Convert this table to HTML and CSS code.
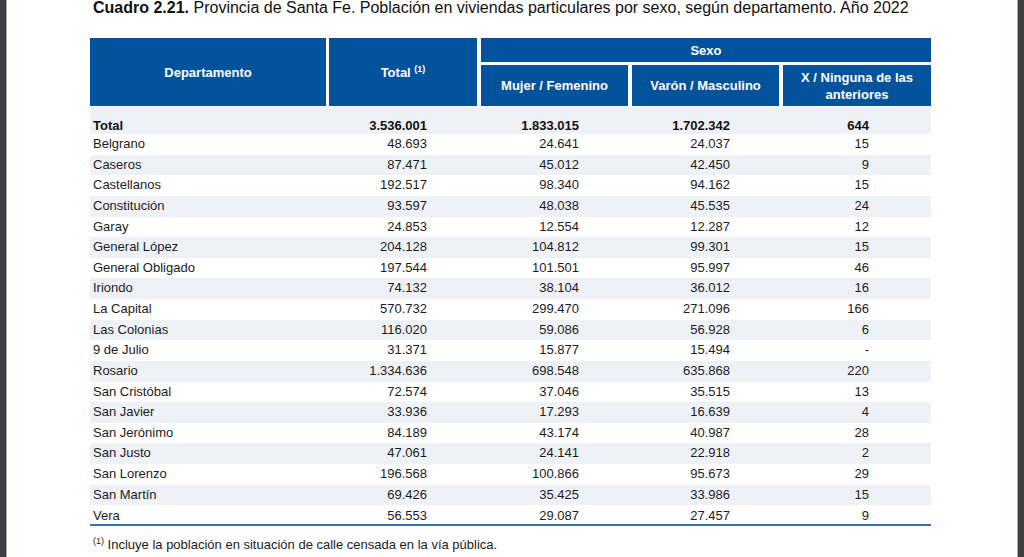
FILE: index.html
```html
<!DOCTYPE html>
<html lang="es">
<head>
<meta charset="utf-8">
<title>Cuadro 2.21</title>
<link rel="stylesheet" href="styles.css">
</head>
<body>
<div class="frame frame-left"></div>
<main class="page">
  <h1 class="title"><b>Cuadro 2.21.</b> Provincia de Santa Fe. Población en viviendas particulares por sexo, según departamento. Año 2022</h1>
  <table class="tbl">
    <colgroup>
      <col class="c-dept"><col class="c-total"><col class="c-num"><col class="c-num"><col class="c-x">
    </colgroup>
    <thead>
      <tr class="r1">
        <th rowspan="2" class="b3">Departamento</th>
        <th rowspan="2" class="b4">Total <sup>(1)</sup></th>
        <th colspan="3" class="sexo">Sexo</th>
      </tr>
      <tr class="r2">
        <th class="b4">Mujer / Femenino</th>
        <th class="b4">Varón / Masculino</th>
        <th class="last">X / Ninguna de las anteriores</th>
      </tr>
    </thead>
    <tbody>
      <tr class="total"><td>Total</td><td class="n">3.536.001</td><td class="n">1.833.015</td><td class="n">1.702.342</td><td class="n x">644</td></tr>
      <tr><td>Belgrano</td><td class="n">48.693</td><td class="n">24.641</td><td class="n">24.037</td><td class="n x">15</td></tr>
      <tr><td>Caseros</td><td class="n">87.471</td><td class="n">45.012</td><td class="n">42.450</td><td class="n x">9</td></tr>
      <tr><td>Castellanos</td><td class="n">192.517</td><td class="n">98.340</td><td class="n">94.162</td><td class="n x">15</td></tr>
      <tr><td>Constitución</td><td class="n">93.597</td><td class="n">48.038</td><td class="n">45.535</td><td class="n x">24</td></tr>
      <tr><td>Garay</td><td class="n">24.853</td><td class="n">12.554</td><td class="n">12.287</td><td class="n x">12</td></tr>
      <tr><td>General López</td><td class="n">204.128</td><td class="n">104.812</td><td class="n">99.301</td><td class="n x">15</td></tr>
      <tr><td>General Obligado</td><td class="n">197.544</td><td class="n">101.501</td><td class="n">95.997</td><td class="n x">46</td></tr>
      <tr><td>Iriondo</td><td class="n">74.132</td><td class="n">38.104</td><td class="n">36.012</td><td class="n x">16</td></tr>
      <tr><td>La Capital</td><td class="n">570.732</td><td class="n">299.470</td><td class="n">271.096</td><td class="n x">166</td></tr>
      <tr><td>Las Colonias</td><td class="n">116.020</td><td class="n">59.086</td><td class="n">56.928</td><td class="n x">6</td></tr>
      <tr><td>9 de Julio</td><td class="n">31.371</td><td class="n">15.877</td><td class="n">15.494</td><td class="n x">-</td></tr>
      <tr><td>Rosario</td><td class="n">1.334.636</td><td class="n">698.548</td><td class="n">635.868</td><td class="n x">220</td></tr>
      <tr><td>San Cristóbal</td><td class="n">72.574</td><td class="n">37.046</td><td class="n">35.515</td><td class="n x">13</td></tr>
      <tr><td>San Javier</td><td class="n">33.936</td><td class="n">17.293</td><td class="n">16.639</td><td class="n x">4</td></tr>
      <tr><td>San Jerónimo</td><td class="n">84.189</td><td class="n">43.174</td><td class="n">40.987</td><td class="n x">28</td></tr>
      <tr><td>San Justo</td><td class="n">47.061</td><td class="n">24.141</td><td class="n">22.918</td><td class="n x">2</td></tr>
      <tr><td>San Lorenzo</td><td class="n">196.568</td><td class="n">100.866</td><td class="n">95.673</td><td class="n x">29</td></tr>
      <tr><td>San Martín</td><td class="n">69.426</td><td class="n">35.425</td><td class="n">33.986</td><td class="n x">15</td></tr>
      <tr class="lastrow"><td>Vera</td><td class="n">56.553</td><td class="n">29.087</td><td class="n">27.457</td><td class="n x">9</td></tr>
    </tbody>
  </table>
  <p class="note"><sup>(1)</sup> Incluye la población en situación de calle censada en la vía pública.</p>
</main>
<div class="frame frame-right"></div>
</body>
</html>
```
FILE: styles.css
```css
html, body {
  margin: 0;
  padding: 0;
  height: 557px;
  overflow: hidden;
  background: #ffffff;
}
body {
  display: flex;
  font-family: "Liberation Sans", Arial, sans-serif;
  color: #1c1c1c;
}
.frame {
  width: 6px;
  flex: none;
  background: #3d4043;
}
.frame-left { border-right: 1px solid #a3a3a3; }
.frame-right { border-left: 1px solid #a8a8a8; width: 6px; margin-left: auto; }
.page {
  flex: 1;
  padding-left: 83px;
}
.title {
  margin: 0;
  padding-left: 3px;
  font-size: 16px;
  line-height: 15px;
  font-weight: normal;
  color: #111;
  white-space: nowrap;
}
.title b { font-weight: bold; }

.tbl {
  margin-top: 23px;
  width: 841px;
  table-layout: fixed;
  border-collapse: separate;
  border-spacing: 0;
  font-size: 13px;
}
.c-dept { width: 239px; }
.c-total { width: 152px; }
.c-num { width: 151px; }
.c-x { width: 148px; }

.tbl th {
  background: #03529c;
  color: #ffffff;
  font-weight: bold;
  text-align: center;
  padding: 0 6px;
  line-height: 17px;
  border-bottom: 1px solid #ffffff;
}
.tbl th.b3 { border-right: 3px solid #ffffff; }
.tbl th.b4 { border-right: 4px solid #ffffff; }
.tbl th.sexo { border-bottom: 3px solid #ffffff; }
.tbl th.last { padding: 0 14px; }
.tbl th sup {
  font-size: 9px;
  vertical-align: 5px;
  line-height: 0;
}
.r1 { height: 27px; }
.r2 { height: 42px; }

.tbl td {
  padding: 0 0 0 3px;
  line-height: 20.63px;
  white-space: nowrap;
}
.tbl td.n { text-align: right; padding-right: 53px; }
.tbl td:nth-child(2) { padding-right: 54px; }
.tbl td.x { padding-right: 62px; }
.tbl tbody tr:nth-child(odd) td { background: #eef2f7; }
.tbl tr.total td {
  font-weight: bold;
  padding-top: 9.5px;
  line-height: 17.5px;
  color: #111;
}
.tbl tr.lastrow td {
  padding-top: 2px;
  line-height: 17px;
  border-bottom: 2px solid #3a71b5;
}

.note {
  margin: 11px 0 0;
  padding-left: 3px;
  font-size: 13px;
  line-height: 16px;
  color: #1c1c1c;
}
.note sup {
  font-size: 9px;
  vertical-align: 5px;
  line-height: 0;
}
```
